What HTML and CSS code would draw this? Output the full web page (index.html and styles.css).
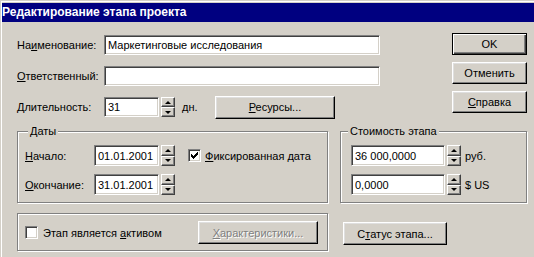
FILE: index.html
```html
<!DOCTYPE html>
<html lang="ru">
<head>
    <meta charset="UTF-8">
    <title>Редактирование этапа проекта</title>
    <link rel="stylesheet" href="styles.css">
</head>
<body>
    <div class="window">
        <div class="titlebar">Редактирование этапа проекта</div>
        <div class="content">
            <div class="top">
                <div class="fields">
                    <div class="row">
                        <label class="label">На<u>и</u>менование:</label>
                        <input type="text" class="field field-wide" value="Маркетинговые исследования">
                    </div>
                    <div class="row">
                        <label class="label"><u>О</u>тветственный:</label>
                        <input type="text" class="field field-wide" value="">
                    </div>
                    <div class="row">
                        <label class="label"><u>Д</u>лительность:</label>
                        <input type="text" class="field field-days" value="31">
                        <div class="spin"><span class="spin-up"></span><span class="spin-down"></span></div>
                        <span class="unit">дн.</span>
                        <button class="btn btn-resources"><u>Р</u>есурсы...</button>
                    </div>
                </div>
                <div class="actions">
                    <button class="btn btn-default">OK</button>
                    <button class="btn">Отменить</button>
                    <button class="btn"><u>С</u>правка</button>
                </div>
            </div>

            <div class="groups">
                <fieldset class="group group-dates">
                    <legend>Даты</legend>
                    <div class="grow">
                        <label class="glabel"><u>Н</u>ачало:</label>
                        <input type="text" class="field field-date" value="01.01.2001">
                        <div class="spin"><span class="spin-up"></span><span class="spin-down"></span></div>
                        <span class="check checked"><svg width="7" height="7" viewBox="0 0 7 7"><path d="M0 2h1v1h1v1h1v-1h1v-1h1v-1h1v-1h1v3h-1v1h-1v1h-1v1h-1v1h-1v-1h-1v-1h-1z" fill="#000"/></svg></span>
                        <span class="check-text"><u>Ф</u>иксированная дата</span>
                    </div>
                    <div class="grow">
                        <label class="glabel"><u>О</u>кончание:</label>
                        <input type="text" class="field field-date" value="31.01.2001">
                        <div class="spin"><span class="spin-up"></span><span class="spin-down"></span></div>
                    </div>
                </fieldset>
                <fieldset class="group group-cost">
                    <legend>Стоимость этапа</legend>
                    <div class="grow cost-row">
                        <input type="text" class="field field-money" value="36 000,0000">
                        <div class="spin"><span class="spin-up"></span><span class="spin-down"></span></div>
                        <span class="currency">руб.</span>
                    </div>
                    <div class="grow cost-row">
                        <input type="text" class="field field-money" value="0,0000">
                        <div class="spin"><span class="spin-up"></span><span class="spin-down"></span></div>
                        <span class="currency">$ US</span>
                    </div>
                </fieldset>
            </div>

            <div class="bottom">
                <fieldset class="group group-asset">
                    <div class="asset-row">
                        <span class="check"></span>
                        <span class="check-text">Этап является <u>а</u>ктивом</span>
                        <button class="btn btn-props" disabled><u>Х</u>арактеристики...</button>
                    </div>
                </fieldset>
                <button class="btn btn-status">С<u>т</u>атус этапа...</button>
            </div>
        </div>
    </div>
</body>
</html>
```

FILE: styles.css
```css
body, html {
    margin: 0;
    padding: 0;
    background-color: #d4d0c8;
    font-family: 'Liberation Sans', Arial, sans-serif;
    font-size: 11px;
    color: #000;
    overflow: hidden;
}
.window {
    height: 257px;
    box-sizing: border-box;
    border-top: 1px solid #d4d0c8;
    border-left: 1px solid #d4d0c8;
    box-shadow: inset 1px 1px #fff;
    padding: 2px 0 0 1px;
}
.titlebar {
    height: 19px;
    line-height: 19px;
    background-color: #000080;
    color: #fff;
    font-size: 12px;
    font-weight: bold;
    white-space: nowrap;
}
.content {
    padding: 11px 7px 0 15px;
}

/* top block: fields + dialog buttons */
.top {
    display: flex;
    justify-content: space-between;
    align-items: flex-start;
}
.fields {
    display: flex;
    flex-direction: column;
    gap: 11px;
    padding-top: 2px;
}
.row {
    display: flex;
    align-items: center;
    height: 20px;
}
.label {
    width: 87px;
    white-space: nowrap;
}
.field {
    box-sizing: border-box;
    height: 20px;
    margin: 0;
    padding: 0 0 0 3px;
    font: inherit;
    color: #000;
    background-color: #fff;
    border: 1px solid;
    border-color: #808080 #fff #fff #808080;
    box-shadow: inset 1px 1px #404040, inset -1px -1px #d4d0c8;
    outline: none;
}
.field-wide {
    width: 276px;
}
.field-days {
    width: 55px;
}
.unit {
    margin-left: 7px;
    width: 33px;
}
.actions {
    display: flex;
    flex-direction: column;
    gap: 7px;
}

/* buttons */
.btn {
    box-sizing: border-box;
    width: 75px;
    height: 22px;
    margin: 0;
    padding: 0;
    font: inherit;
    color: #000;
    background-color: #d4d0c8;
    border: 1px solid;
    border-color: #fff #000 #000 #fff;
    box-shadow: inset -1px -1px #808080, inset 1px 1px #dfdfdf;
    cursor: pointer;
}
.btn-default {
    border-color: #000;
    box-shadow: inset 1px 1px #fff, inset -1px -1px #404040, inset -2px -2px #808080;
}
.btn-resources {
    width: 120px;
    height: 23px;
    flex-shrink: 0;
}
.btn[disabled] {
    color: #808080;
    text-shadow: 1px 1px #fff;
    cursor: default;
}

/* spin buttons */
.spin {
    display: flex;
    flex-direction: column;
    width: 14px;
    height: 20px;
    margin-left: 2px;
    flex-shrink: 0;
}
.spin span {
    flex: 1;
    display: flex;
    align-items: center;
    justify-content: center;
    box-sizing: border-box;
    background-color: #d4d0c8;
    border: 1px solid;
    border-color: #fff #404040 #404040 #fff;
    box-shadow: inset -1px -1px #808080;
}
.spin-up::after,
.spin-down::after {
    content: "";
    width: 0;
    height: 0;
    border-left: 3px solid transparent;
    border-right: 3px solid transparent;
}
.spin-up::after {
    border-bottom: 3px solid #000;
}
.spin-down::after {
    border-top: 3px solid #000;
}

/* group boxes */
.groups {
    display: flex;
    justify-content: space-between;
    margin-top: 7px;
}
.group {
    box-sizing: border-box;
    margin: 0;
    min-width: 0;
    padding: 7px 7px 7px 7px;
    border: 1px solid #808080;
    box-shadow: inset 1px 1px #fff, 1px 1px #fff;
}
.group legend {
    padding: 0 2px;
    margin-left: 3px;
    line-height: 14px;
    background-color: #d4d0c8;
}
.group-dates {
    width: 311px;
}
.group-cost {
    width: 187px;
}
.group-cost legend {
    margin-left: 0;
}
.grow {
    display: flex;
    align-items: center;
    height: 21px;
}
.grow + .grow {
    margin-top: 8px;
}
.grow .field,
.grow .spin {
    height: 21px;
}
.glabel {
    width: 69px;
    white-space: nowrap;
}
.field-date {
    width: 65px;
}
.cost-row {
    padding-left: 3px;
}
.field-money {
    width: 94px;
}
.currency {
    margin-left: 4px;
    white-space: nowrap;
}

/* check boxes */
.check {
    box-sizing: border-box;
    width: 13px;
    height: 13px;
    flex-shrink: 0;
    display: flex;
    align-items: center;
    justify-content: center;
    background-color: #fff;
    border: 1px solid;
    border-color: #808080 #fff #fff #808080;
    box-shadow: inset 1px 1px #404040, inset -1px -1px #d4d0c8;
}
.check svg {
    display: block;
}
.checked {
    margin-left: 13px;
}
.check-text {
    margin-left: 4px;
    white-space: nowrap;
}

/* bottom block */
.bottom {
    display: flex;
    align-items: flex-start;
    margin-top: 10px;
}
.group-asset {
    width: 311px;
    padding: 7px 9px 6px 7px;
}
.asset-row {
    display: flex;
    align-items: center;
    height: 23px;
}
.asset-row .check-text {
    margin-left: 5px;
}
.btn-props {
    width: 120px;
    height: 23px;
    margin-left: auto;
}
.btn-status {
    width: 104px;
    height: 23px;
    margin: 9px 0 0 15px;
}
```
